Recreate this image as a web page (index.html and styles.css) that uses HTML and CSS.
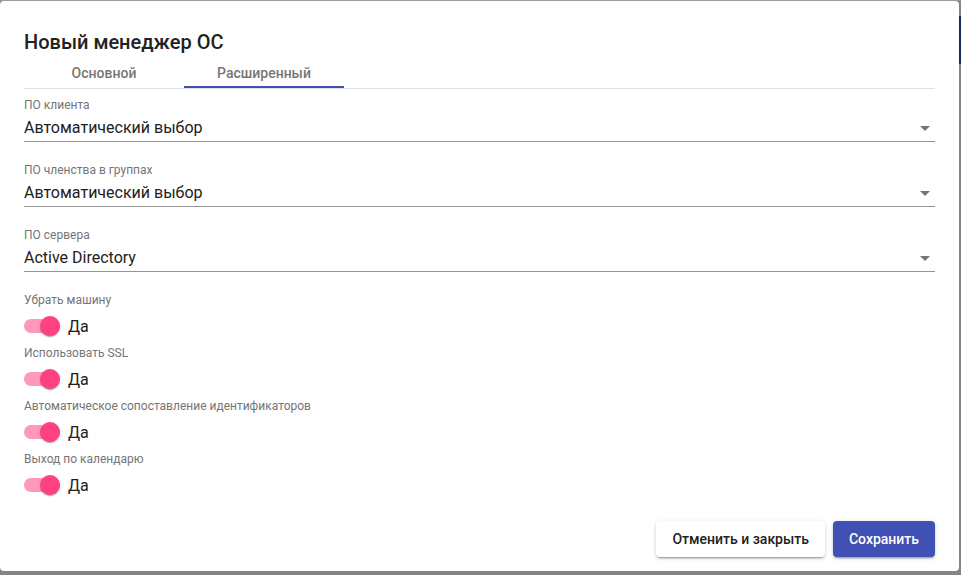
FILE: index.html
```html
<!DOCTYPE html>
<html lang="ru">
<head>
<meta charset="utf-8">
<title>Новый менеджер ОС</title>
<link rel="stylesheet" href="styles.css">
</head>
<body>
<div class="dialog">
  <h2 class="title">Новый менеджер ОС</h2>
  <div class="tabs">
    <div class="tab">Основной</div>
    <div class="tab active">Расширенный</div>
  </div>
  <div class="form">
    <div class="field">
      <div class="label">ПО клиента</div>
      <div class="select"><span class="value">Автоматический выбор</span><span class="arrow"></span></div>
    </div>
    <div class="field">
      <div class="label">ПО членства в группах</div>
      <div class="select"><span class="value">Автоматический выбор</span><span class="arrow"></span></div>
    </div>
    <div class="field">
      <div class="label">ПО сервера</div>
      <div class="select"><span class="value">Active Directory</span><span class="arrow"></span></div>
    </div>

    <div class="toggle-group">
      <div class="label">Убрать машину</div>
      <div class="toggle"><span class="switch"><span class="track"></span><span class="thumb"></span></span><span class="toggle-text">Да</span></div>
    </div>
    <div class="toggle-group">
      <div class="label">Использовать SSL</div>
      <div class="toggle"><span class="switch"><span class="track"></span><span class="thumb"></span></span><span class="toggle-text">Да</span></div>
    </div>
    <div class="toggle-group">
      <div class="label">Автоматическое сопоставление идентификаторов</div>
      <div class="toggle"><span class="switch"><span class="track"></span><span class="thumb"></span></span><span class="toggle-text">Да</span></div>
    </div>
    <div class="toggle-group">
      <div class="label">Выход по календарю</div>
      <div class="toggle"><span class="switch"><span class="track"></span><span class="thumb"></span></span><span class="toggle-text">Да</span></div>
    </div>
  </div>
  <div class="actions">
    <button class="btn btn-cancel">Отменить и закрыть</button>
    <button class="btn btn-save">Сохранить</button>
  </div>
</div>
</body>
</html>
```

FILE: styles.css
```css
html, body {
  margin: 0;
  padding: 0;
}
body {
  width: 961px;
  height: 575px;
  overflow: hidden;
  padding-top: 1px;
  box-sizing: border-box;
  background:
    linear-gradient(to bottom, #9c9c9c 0, #9c9c9c 1px, transparent 1px),
    linear-gradient(to bottom, transparent 16px, #1e2759 16px, #1e2759 64px, transparent 64px) right top / 2px 100% no-repeat,
    #858585;
  font-family: Roboto, "Noto Sans", "Liberation Sans", sans-serif;
  color: rgba(0, 0, 0, 0.87);
}
.dialog {
  width: 959px;
  height: 570px;
  box-sizing: border-box;
  background: #fff;
  border-radius: 4px;
  padding: 25px 24px 0 24px;
}
.title {
  margin: 0;
  font-size: 20px;
  font-weight: 500;
  line-height: 32px;
  color: #212121;
}
.tabs {
  display: flex;
  border-bottom: 1px solid #e0e0e0;
  height: 30px;
}
.tab {
  width: 160px;
  height: 30px;
  line-height: 30px;
  text-align: center;
  font-size: 14px;
  font-weight: 500;
  color: #767676;
}
.tab.active {
  box-shadow: inset 0 -2px 0 #3f51b5;
}
.form {
  padding-top: 8px;
}
.label {
  font-size: 12px;
  line-height: 16px;
  height: 16px;
  color: #757575;
  white-space: nowrap;
}
.field {
  margin-bottom: 20px;
}
.select {
  display: flex;
  align-items: center;
  margin-top: 3px;
  height: 24px;
  padding-bottom: 1px;
  border-bottom: 1px solid #949494;
}
.value {
  flex: 1;
  font-size: 16px;
  line-height: 24px;
  color: #212121;
}
.arrow {
  width: 0;
  height: 0;
  border-left: 5px solid transparent;
  border-right: 5px solid transparent;
  border-top: 5px solid rgba(0, 0, 0, 0.54);
  margin-right: 5px;
}
.toggle-group {
  height: 53px;
}
.toggle {
  display: flex;
  align-items: center;
  margin-top: 6px;
  height: 24px;
}
.switch {
  display: grid;
  width: 36px;
  height: 20px;
  align-items: center;
}
.track, .thumb {
  grid-area: 1 / 1;
}
.track {
  height: 14px;
  width: 36px;
  border-radius: 8px;
  background: #ff98bb;
}
.thumb {
  justify-self: end;
  width: 20px;
  height: 20px;
  border-radius: 50%;
  background: #ff4081;
  box-shadow: 0 2px 1px -1px rgba(0,0,0,.2), 0 1px 1px 0 rgba(0,0,0,.14), 0 1px 3px 0 rgba(0,0,0,.12);
}
.toggle-text {
  margin-left: 8px;
  font-size: 16px;
  line-height: 24px;
  padding-top: 2px;
  color: #212121;
}
.actions {
  display: flex;
  justify-content: flex-end;
  gap: 8px;
  padding-top: 17px;
}
.btn {
  height: 36px;
  padding: 0 16px;
  border: none;
  border-radius: 4px;
  font-family: Roboto, "Noto Sans", "Liberation Sans", sans-serif;
  font-size: 14px;
  font-weight: 500;
  line-height: 36px;
}
.btn-cancel {
  background: #fff;
  color: #212121;
  box-shadow: 0 3px 1px -2px rgba(0,0,0,.2), 0 2px 2px 0 rgba(0,0,0,.14), 0 1px 5px 0 rgba(0,0,0,.12);
}
.btn-save {
  background: #3f51b5;
  color: #fff;
  box-shadow: 0 3px 1px -2px rgba(0,0,0,.2), 0 2px 2px 0 rgba(0,0,0,.14), 0 1px 5px 0 rgba(0,0,0,.12);
}
```
